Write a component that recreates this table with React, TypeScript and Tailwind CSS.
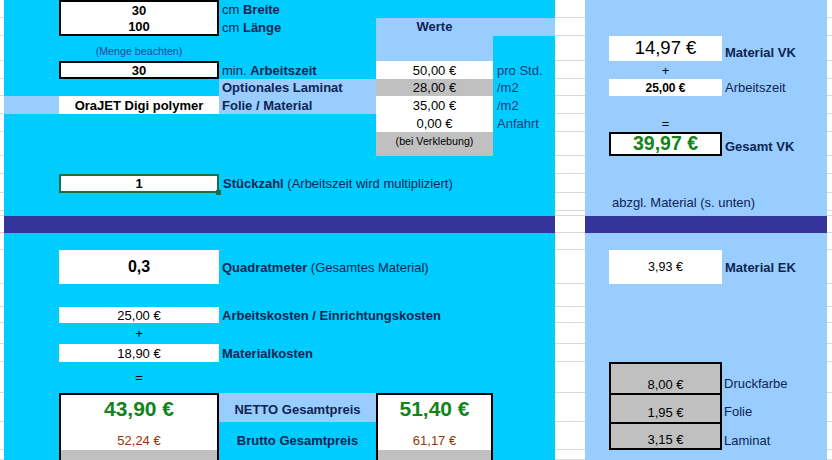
import type { ReactNode } from 'react'
import { twMerge } from 'tailwind-merge'

const COLS = 'grid-cols-[4px_55px_160px_157px_117px_62px_30px_24px_113px_105px_5px]'
const ROWS =
  'grid-rows-[18px_18px_25px_18px_17px_18px_18px_24px_18px_19px_18px_5px_17px_17px_34px_23px_16px_21px_18px_31px_29px_28px_10px]'

// white spreadsheet columns between the coloured blocks, only gridlines
const Gutter = ({ col }: { col: string }) => (
  <div className={`${col} row-span-full grid bg-white ${ROWS}`}>
    {Array.from({ length: 23 }).map((_, i) => (
      <div key={i} className="border-b border-[#d9d9d9]" />
    ))}
  </div>
)

const Label = ({ className, children }: { className: string; children: ReactNode }) => (
  <div className={twMerge('flex items-center whitespace-nowrap pl-[3px]', className)}>{children}</div>
)

const Value = ({ className, children }: { className: string; children: ReactNode }) => (
  <div className={twMerge('flex items-center justify-center whitespace-nowrap text-black', className)}>
    {children}
  </div>
)

const App = () => {
  return (
    <div
      className={`grid ${COLS} ${ROWS} h-[460px] w-[832px] overflow-hidden bg-white font-['Liberation_Sans',Arial,sans-serif] text-[13px] leading-none text-[#0e2552]`}
    >
      {/* blocks */}
      <div className="col-start-2 col-span-5 row-span-full bg-[#00ccff]" />
      <div className="col-start-8 col-span-3 row-span-full bg-[#99ccff]" />
      <Gutter col="col-start-1" />
      <Gutter col="col-start-7" />
      <Gutter col="col-start-11" />
      <div className="col-start-2 col-span-5 row-start-13 bg-[#333399]" />
      <div className="col-start-8 col-span-3 row-start-13 bg-[#333399]" />

      {/* Eingaben */}
      <div className="col-start-3 row-start-1 row-span-2 flex flex-col border-2 border-black bg-white font-bold text-black">
        <div className="flex flex-1 items-center justify-center">30</div>
        <div className="flex flex-1 items-center justify-center">100</div>
      </div>
      <Label className="col-start-4 row-start-1">
        cm&nbsp;<b>Breite</b>
      </Label>
      <Label className="col-start-4 row-start-2">
        cm&nbsp;<b>Länge</b>
      </Label>

      <div className="col-start-5 row-start-2 row-span-2 bg-[#99ccff] pt-[2px] text-center font-bold">Werte</div>
      <div className="col-start-6 row-start-2 bg-[#99ccff]" />

      <div className="col-start-3 row-start-3 flex items-end justify-center pb-[4px] text-[10.7px] text-[#23469a]">
        (Menge beachten)
      </div>

      <Value className="col-start-3 row-start-4 border-2 border-black bg-white font-bold">30</Value>
      <Label className="col-start-4 row-start-4">
        min.&nbsp;<b>Arbeitszeit</b>
      </Label>

      <Label className="col-start-4 row-start-5 bg-[#99ccff] font-bold">Optionales Laminat</Label>
      <div className="col-start-2 row-start-6 bg-[#99ccff]" />
      <Value className="col-start-3 row-start-6 bg-white font-bold">OraJET Digi polymer</Value>
      <Label className="col-start-4 row-start-6 bg-[#99ccff] font-bold">Folie / Material</Label>

      {/* Werte */}
      <Value className="col-start-5 row-start-4 bg-white">50,00 €</Value>
      <Value className="col-start-5 row-start-5 bg-[#c0c0c0]">28,00 €</Value>
      <Value className="col-start-5 row-start-6 bg-white">35,00 €</Value>
      <Value className="col-start-5 row-start-7 bg-white">0,00 €</Value>
      <div className="col-start-5 row-start-8 bg-[#c0c0c0] pt-[4px] text-center text-[10.7px] text-black">
        (bei Verklebung)
      </div>
      <Label className="col-start-6 row-start-4 pl-[4px] text-[#16397a]">pro Std.</Label>
      <Label className="col-start-6 row-start-5 pl-[4px] text-[#16397a]">/m2</Label>
      <Label className="col-start-6 row-start-6 pl-[4px] text-[#16397a]">/m2</Label>
      <Label className="col-start-6 row-start-7 pl-[4px] text-[#16397a]">Anfahrt</Label>

      {/* Stückzahl */}
      <div className="relative col-start-3 row-start-10 flex items-center justify-center border-2 border-[#1d6f42] bg-white font-bold text-black">
        1
        <span className="absolute -bottom-[4px] -right-[4px] size-[5px] bg-[#1d6f42]" />
      </div>
      <Label className="col-start-4 col-span-3 row-start-10 pl-[4px]">
        <b>Stückzahl</b>&nbsp;(Arbeitszeit wird multipliziert)
      </Label>

      {/* Berechnung */}
      <Value className="col-start-3 row-start-15 bg-white text-[16px] font-bold">0,3</Value>
      <Label className="col-start-4 col-span-3 row-start-15">
        <b>Quadratmeter</b>&nbsp;(Gesamtes Material)
      </Label>

      <Value className="col-start-3 row-start-17 bg-white">25,00 €</Value>
      <Label className="col-start-4 col-span-3 row-start-17 font-bold">Arbeitskosten / Einrichtungskosten</Label>
      <Value className="col-start-3 row-start-18">+</Value>
      <Value className="col-start-3 row-start-19 bg-white">18,90 €</Value>
      <Label className="col-start-4 col-span-3 row-start-19 font-bold">Materialkosten</Label>
      <Value className="col-start-3 row-start-20">=</Value>

      <div className="col-start-3 row-start-21 row-span-3 flex flex-col border-x-2 border-t-2 border-black bg-white">
        <div className="flex h-[27px] items-center justify-center text-[21px] font-bold text-[#12841a]">43,90 €</div>
        <div className="flex h-[28px] items-end justify-center pb-[3px] text-[#993300]">52,24 €</div>
        <div className="flex-1 bg-[#c0c0c0]" />
      </div>
      <div className="col-start-4 row-start-21 flex items-end justify-center bg-[#99ccff] pb-[6px] font-bold">
        NETTO Gesamtpreis
      </div>
      <div className="col-start-4 row-start-22 flex items-end justify-center pb-[3px] font-bold">Brutto Gesamtpreis</div>
      <div className="col-start-5 row-start-21 row-span-3 flex flex-col border-x-2 border-t-2 border-black bg-white">
        <div className="flex h-[27px] items-center justify-center text-[21px] font-bold text-[#12841a]">51,40 €</div>
        <div className="flex h-[28px] items-end justify-center pb-[3px] text-[#993300]">61,17 €</div>
        <div className="flex-1 bg-[#c0c0c0]" />
      </div>

      {/* rechte Spalte */}
      <Value className="col-start-9 row-start-3 bg-white text-[18.5px]">14,97 €</Value>
      <Label className="col-start-10 row-start-3 items-end pb-[2px] font-bold">Material VK</Label>
      <Value className="col-start-9 row-start-4">+</Value>
      <Value className="col-start-9 row-start-5 bg-white text-[12px] font-bold">25,00 €</Value>
      <Label className="col-start-10 row-start-5">Arbeitszeit</Label>
      <Value className="col-start-9 row-start-7">=</Value>
      <Value className="col-start-9 row-start-8 border-2 border-black bg-white text-[19.5px] font-bold text-[#12841a]">
        39,97 €
      </Value>
      <Label className="col-start-10 row-start-8 items-end pb-[3px] font-bold">Gesamt VK</Label>
      <Label className="col-start-9 col-span-2 row-start-11">abzgl. Material (s. unten)</Label>

      <Value className="col-start-9 row-start-15 bg-white text-[12.5px]">3,93 €</Value>
      <Label className="col-start-10 row-start-15 font-bold">Material EK</Label>

      <div className="col-start-9 row-start-20 row-span-3 flex flex-col border-2 border-black bg-[#c0c0c0] text-black">
        <div className="flex h-[29px] items-end justify-center pb-[2px]">8,00 €</div>
        <div className="flex h-[29px] items-end justify-center border-t-2 border-black pb-[3px]">1,95 €</div>
        <div className="flex flex-1 items-end justify-center border-t-2 border-black pb-[2px]">3,15 €</div>
      </div>
      <Label className="col-start-10 row-start-20 items-end pb-[3px] pl-[2px]">Druckfarbe</Label>
      <Label className="col-start-10 row-start-21 items-end pb-[4px] pl-[2px]">Folie</Label>
      <Label className="col-start-10 row-start-22 items-end pb-[3px] pl-[2px]">Laminat</Label>
    </div>
  )
}

export default App
